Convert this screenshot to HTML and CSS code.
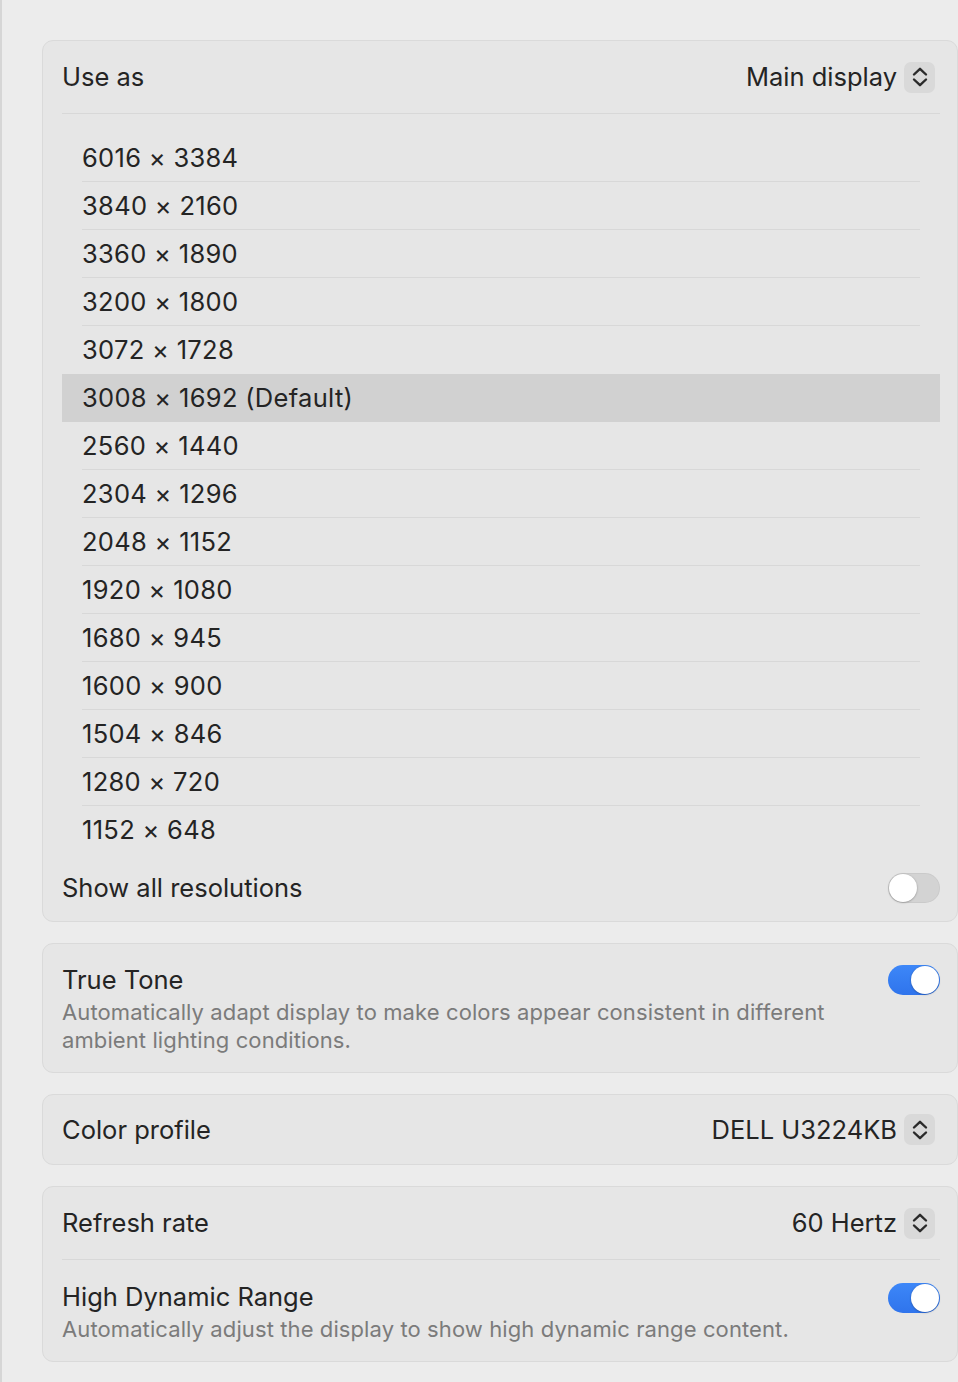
FILE: index.html
```html
<!DOCTYPE html>
<html>
<head>
<meta charset="utf-8">
<link rel="stylesheet" href="styles.css">
</head>
<body>
<div class="pane">
  <section class="card">
    <div class="row head">
      <span class="label">Use as</span>
      <span class="popup"><span class="popup-text">Main display</span><span class="stepper"><svg viewBox="0 0 30 30" width="30" height="30"><path d="M9 12.5 L15 6.8 L21 12.5 M9 17.5 L15 23.2 L21 17.5" fill="none" stroke="#2a2a2a" stroke-width="2.4" stroke-linecap="round" stroke-linejoin="round"/></svg></span></span>
    </div>
    <ul class="res-list">
      <li class="res">6016 × 3384</li>
      <li class="res">3840 × 2160</li>
      <li class="res">3360 × 1890</li>
      <li class="res">3200 × 1800</li>
      <li class="res before-sel">3072 × 1728</li>
      <li class="res selected">3008 × 1692 (Default)</li>
      <li class="res">2560 × 1440</li>
      <li class="res">2304 × 1296</li>
      <li class="res">2048 × 1152</li>
      <li class="res">1920 × 1080</li>
      <li class="res">1680 × 945</li>
      <li class="res">1600 × 900</li>
      <li class="res">1504 × 846</li>
      <li class="res">1280 × 720</li>
      <li class="res last">1152 × 648</li>
    </ul>
    <div class="row show-all">
      <span class="label">Show all resolutions</span>
      <span class="toggle off"><span class="knob"></span></span>
    </div>
  </section>

  <section class="card">
    <div class="row described">
      <div class="text">
        <div class="label">True Tone</div>
        <div class="desc">Automatically adapt display to make colors appear consistent in different<br>ambient lighting conditions.</div>
      </div>
      <span class="toggle on"><span class="knob"></span></span>
    </div>
  </section>

  <section class="card">
    <div class="row single">
      <span class="label">Color profile</span>
      <span class="popup"><span class="popup-text">DELL U3224KB</span><span class="stepper"><svg viewBox="0 0 30 30" width="30" height="30"><path d="M9 12.5 L15 6.8 L21 12.5 M9 17.5 L15 23.2 L21 17.5" fill="none" stroke="#2a2a2a" stroke-width="2.4" stroke-linecap="round" stroke-linejoin="round"/></svg></span></span>
    </div>
  </section>

  <section class="card">
    <div class="row head">
      <span class="label">Refresh rate</span>
      <span class="popup"><span class="popup-text">60 Hertz</span><span class="stepper"><svg viewBox="0 0 30 30" width="30" height="30"><path d="M9 12.5 L15 6.8 L21 12.5 M9 17.5 L15 23.2 L21 17.5" fill="none" stroke="#2a2a2a" stroke-width="2.4" stroke-linecap="round" stroke-linejoin="round"/></svg></span></span>
    </div>
    <div class="row described hdr">
      <div class="text">
        <div class="label">High Dynamic Range</div>
        <div class="desc">Automatically adjust the display to show high dynamic range content.</div>
      </div>
      <span class="toggle on"><span class="knob"></span></span>
    </div>
  </section>
</div>
</body>
</html>
```

FILE: styles.css
```css
* { box-sizing: border-box; }
html, body {
  margin: 0;
  padding: 0;
  background: #ececec;
  width: 958px;
  height: 1382px;
  overflow: hidden;
}
body {
  font-family: Inter, "Noto Sans", "Liberation Sans", sans-serif;
  color: #242424;
}
.pane {
  border-left: 2px solid #d6d6d6;
  height: 1382px;
  padding: 40px 0 0 40px;
  display: flex;
  flex-direction: column;
  gap: 21px;
}
.card {
  width: 916px;
  background: #e6e6e6;
  border: 1px solid #dadada;
  border-radius: 11px;
  padding: 0 17px 0 19px;
}
.row {
  display: flex;
  align-items: center;
  justify-content: space-between;
}
.label {
  font-size: 25.5px;
  letter-spacing: 0;
  line-height: 32px;
}
.head {
  height: 73px;
  border-bottom: 1px solid #d8d8d8;
}
.popup {
  display: flex;
  align-items: center;
  gap: 7px;
  padding-right: 5px;
}
.popup-text {
  font-size: 25.5px;
  letter-spacing: 0;
  line-height: 32px;
}
.stepper {
  width: 31px;
  height: 31px;
  border-radius: 7px;
  background: #d9d9d9;
  display: flex;
  align-items: center;
  justify-content: center;
}
.stepper svg { display: block; }
.res-list {
  list-style: none;
  margin: 0;
  padding: 20px 0 0 0;
}
.res {
  height: 48px;
  padding: 0 20px;
  font-size: 25.5px;
  letter-spacing: 0.3px;
  line-height: 48px;
  position: relative;
}
.res::after {
  content: "";
  position: absolute;
  left: 20px;
  right: 20px;
  bottom: 0;
  height: 1px;
  background: #d8d8d8;
}
.res.selected {
  background: #d1d1d1;
}
.res.selected::after, .res.before-sel::after, .res.last::after { display: none; }
.show-all {
  height: 67px;
}
.toggle {
  width: 52px;
  height: 30px;
  border-radius: 15px;
  position: relative;
  flex: none;
}
.toggle.off {
  background: #d3d3d3;
  box-shadow: inset 0 0 0 1px rgba(0,0,0,0.04);
}
.toggle.on {
  background: linear-gradient(#3d87f8, #2f74ec);
}
.knob {
  position: absolute;
  top: 1px;
  width: 28px;
  height: 28px;
  border-radius: 50%;
  background: #fff;
  box-shadow: 0 0.5px 2px rgba(0,0,0,0.35);
}
.toggle.off .knob { left: 1px; }
.toggle.on .knob { right: 1px; }
.described {
  align-items: flex-start;
  padding: 20px 0 18px 0;
}
.described .toggle { margin-top: 1px; }
.desc {
  font-size: 22px;
  letter-spacing: 0.1px;
  line-height: 28px;
  color: #7b7b7b;
  margin-top: 2px;
}
.single {
  height: 69px;
}
.hdr {
  padding: 21px 0 18px 0;
}
.hdr .toggle { margin-top: 2px; }
```
